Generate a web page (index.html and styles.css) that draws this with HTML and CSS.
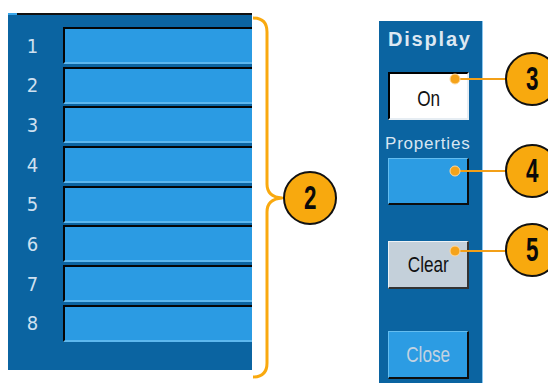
FILE: index.html
```html
<!DOCTYPE html>
<html lang="en">
<head>
    <meta charset="UTF-8">
    <title>Display menu</title>
    <link rel="stylesheet" href="styles.css">
</head>
<body>
    <div class="stage">
        <section class="channels">
            <div class="rows">
                <span class="num">1</span><div class="field"></div>
                <span class="num">2</span><div class="field"></div>
                <span class="num">3</span><div class="field"></div>
                <span class="num">4</span><div class="field"></div>
                <span class="num">5</span><div class="field"></div>
                <span class="num">6</span><div class="field"></div>
                <span class="num">7</span><div class="field"></div>
                <span class="num">8</span><div class="field"></div>
            </div>
        </section>

        <aside class="menu">
            <div class="menu-title">Display</div>
            <div class="btn btn-on"><span class="narrow">On</span></div>
            <div class="menu-label">Properties</div>
            <div class="btn btn-blue btn-props"></div>
            <div class="btn btn-gray btn-clear"><span class="narrow">Clear</span></div>
            <div class="btn btn-blue btn-close"><span class="narrow">Close</span></div>
        </aside>

        <!-- callout brace, leader lines and dots -->
        <svg class="callouts" width="548" height="383" viewBox="0 0 548 383">
            <path d="M253,18 Q267,18 267,32 L267,184 Q267,197 282,198 Q267,199 267,212 L267,363 Q267,377 253,377"
                  fill="none" stroke="#f9a90f" stroke-width="3" stroke-linejoin="round"/>
            <line x1="455" y1="79" x2="506" y2="79" stroke="#f3a018" stroke-width="2"/>
            <line x1="455" y1="171" x2="506" y2="171" stroke="#f3a018" stroke-width="2"/>
            <line x1="455" y1="251" x2="506" y2="251" stroke="#f3a018" stroke-width="2"/>
            <circle cx="455" cy="79" r="5" fill="#f5a31a" stroke="#ffd9a0" stroke-width="1"/>
            <circle cx="455" cy="171" r="5" fill="#f5a31a" stroke="#ffd9a0" stroke-width="1"/>
            <circle cx="455" cy="251" r="5" fill="#f5a31a" stroke="#ffd9a0" stroke-width="1"/>
        </svg>

        <div class="badge b2"><span>2</span></div>
        <div class="badge b3"><span>3</span></div>
        <div class="badge b4"><span>4</span></div>
        <div class="badge b5"><span>5</span></div>
    </div>
</body>
</html>
```

FILE: styles.css
```css
body {
    margin: 0;
    background-color: #fff;
    font-family: "Liberation Sans", Arial, sans-serif;
}
.stage {
    position: relative;
    width: 548px;
    height: 383px;
    overflow: hidden;
    display: flex;
    align-items: flex-start;
}
.channels {
    position: relative;
    box-sizing: border-box;
    width: 244px;
    height: 357px;
    margin: 13px 0 0 8px;
    padding-top: 12px;
    background-color: #0b64a1;
    border-top: 2px solid #111;
}
.channels::before {
    content: "";
    position: absolute;
    left: 0;
    top: -2px;
    width: 9px;
    height: 2px;
    background-color: #3aa6ea;
}
.rows {
    display: grid;
    grid-template-columns: 55px 1fr;
    row-gap: 2.7px;
}
.num {
    display: flex;
    align-items: center;
    justify-content: center;
    padding-right: 6px;
    color: #cfe0f0;
    font-family: "DejaVu Sans Condensed", "DejaVu Sans", sans-serif;
    font-size: 20px;
}
.field {
    height: 33px;
    background-color: #2b9be3;
    border-top: 2px solid #050505;
    border-left: 2px solid #050505;
    border-bottom: 2px solid #5db7ee;
}
.menu {
    box-sizing: border-box;
    width: 104px;
    height: 362px;
    margin: 21px 0 0 127px;
    padding: 6px 0 0 9px;
    background-color: #0b64a1;
    border-right: 1px solid #8ac6ee;
    display: flex;
    flex-direction: column;
    align-items: flex-start;
}
.menu-title {
    height: 24px;
    line-height: 24px;
    width: 82px;
    text-align: center;
    font-weight: bold;
    font-size: 20px;
    letter-spacing: 1.8px;
    color: #dde8f2;
}
.menu-label {
    margin-top: 14px;
    margin-left: -3px;
    height: 20px;
    line-height: 20px;
    font-size: 17px;
    letter-spacing: 0.8px;
    color: #d8e6f2;
}
.btn {
    box-sizing: border-box;
    width: 81px;
    height: 48px;
    display: flex;
    align-items: center;
    justify-content: center;
    font-size: 22px;
}
.narrow {
    display: inline-block;
    transform: scaleX(0.78);
}
.btn-on {
    margin-top: 21px;
    background-color: #fff;
    color: #111;
    border: 2px solid;
    border-color: #000 #e6edf3 #e6edf3 #000;
}
.btn-on .narrow {
    margin-top: 6px;
}
.btn-blue {
    background-color: #2c9ce3;
    border-top: 1px solid #64bdf0;
    border-left: 1px solid #64bdf0;
    border-right: 2px solid #0d0d0d;
    border-bottom: 2px solid #0d0d0d;
}
.btn-props {
    margin-top: 4px;
    height: 47px;
}
.btn-gray {
    background-color: #c4d0da;
    color: #111;
    border-top: 1px solid #eef2f5;
    border-left: 1px solid #eef2f5;
    border-right: 2px solid #333;
    border-bottom: 2px solid #333;
}
.btn-clear {
    margin-top: 36px;
}
.btn-close {
    margin-top: 42px;
    color: #c3d3e1;
}
.callouts {
    position: absolute;
    left: 0;
    top: 0;
    pointer-events: none;
}
.badge {
    position: absolute;
    box-sizing: border-box;
    width: 54px;
    height: 54px;
    border: 2px solid #111;
    border-radius: 50%;
    background-color: #f8a90e;
    display: flex;
    align-items: center;
    justify-content: center;
    font-weight: bold;
    font-size: 33px;
    color: #0a0a0a;
}
.badge span {
    display: inline-block;
    transform: scaleX(0.68);
}
.b2 { left: 283px; top: 171px; }
.b3 { left: 505px; top: 52px; }
.b4 { left: 505px; top: 144px; }
.b5 { left: 505px; top: 223px; }
```
